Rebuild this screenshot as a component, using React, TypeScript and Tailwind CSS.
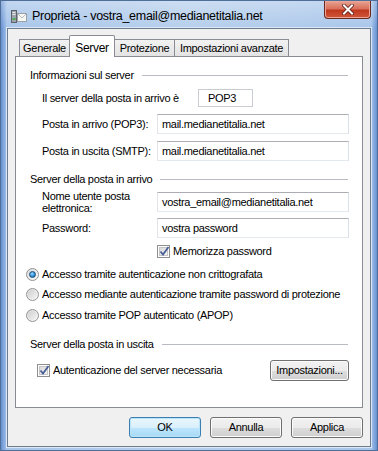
import type { ReactNode } from 'react'

const font = { fontFamily: '"Liberation Sans", Arial, sans-serif' }

function GroupHeader({ title }: { title: string }) {
  return (
    <div className="ml-[4px] flex h-[14px] items-center gap-[8px] pr-[1px]">
      <span className="whitespace-nowrap">{title}</span>
      <div className="h-px flex-1 bg-[#b8bcc2]" />
    </div>
  )
}

function TextBox({ value, className = '' }: { value: string; className?: string }) {
  return (
    <div
      className={`flex h-[20px] items-center whitespace-nowrap border border-[#abadb3] border-l-[#e2e3ea] border-b-[#e3e9ef] border-r-[#dbdfe6] bg-white pl-[4px] ${className}`}
    >
      {value}
    </div>
  )
}

function Checkbox({ checked }: { checked: boolean }) {
  return (
    <div className="flex h-[13px] w-[13px] shrink-0 items-center justify-center border border-[#8e8f8f] bg-white">
      <div className="relative h-[9px] w-[9px] border border-[#c6c6c6] bg-[linear-gradient(135deg,#d9d9d9,#f6f6f6)]">
        {checked && (
          <svg className="absolute -left-[1px] -top-[2px]" width="11" height="11" viewBox="0 0 11 11">
            <path d="M1.5 5.5 L4 8.5 L9.5 1" fill="none" stroke="#4a5f97" strokeWidth="1.8" />
          </svg>
        )}
      </div>
    </div>
  )
}

function Radio({ checked }: { checked: boolean }) {
  return (
    <div className="flex h-[13px] w-[13px] shrink-0 items-center justify-center rounded-full border border-[#929292] bg-[linear-gradient(135deg,#dcdcdc,#fbfbfb)]">
      {checked ? (
        <div className="h-[7px] w-[7px] rounded-full border border-[#1d4d7d] bg-[radial-gradient(circle_at_40%_35%,#9fdcff,#2c8fd6_55%,#14528f)]" />
      ) : (
        <div className="h-[9px] w-[9px] rounded-full bg-[linear-gradient(135deg,#cfcfcf,#f4f4f4)]" />
      )}
    </div>
  )
}

function Button({ children, primary, className = '' }: { children: ReactNode; primary?: boolean; className?: string }) {
  return (
    <div
      className={`flex h-[21px] items-center justify-center whitespace-nowrap rounded-[3px] border ${
        primary
          ? 'border-[#3c7fb1] bg-[linear-gradient(#eaf6fd_0%,#d9f0fc_50%,#bee6fd_51%,#a7d9f5_100%)] shadow-[inset_0_0_0_1px_#b9e3f8]'
          : 'border-[#707070] bg-[linear-gradient(#f2f2f2_0%,#ebebeb_50%,#dddddd_51%,#cfcfcf_100%)] shadow-[inset_0_0_0_1px_#fbfbfb]'
      } ${className}`}
    >
      {children}
    </div>
  )
}

function Tab({ label, active, width }: { label: string; active?: boolean; width: string }) {
  if (active) {
    return (
      <div
        className={`relative z-10 -mb-px flex h-[22px] items-start justify-center whitespace-nowrap rounded-t-[2px] border border-b-0 border-[#898c95] bg-white pt-[3px] text-[12px] ${width}`}
      >
        {label}
      </div>
    )
  }
  return (
    <div
      className={`flex h-[17px] items-center justify-center whitespace-nowrap border border-b-0 border-[#898c95] bg-[linear-gradient(#f2f2f2,#e3e3e3)] ${width}`}
    >
      {label}
    </div>
  )
}

export default function App() {
  return (
    <div
      className="flex h-[451px] w-[378px] flex-col overflow-hidden border border-[#4f6f99] bg-[linear-gradient(180deg,rgba(255,255,255,0.3),rgba(255,255,255,0)_28px),linear-gradient(90deg,#6591d3,#a8c5ea_6px,#b6cfec_50%,#a8c5ea_calc(100%_-_6px),#6591d3)] text-[11px] tracking-[-0.3px] text-black"
      style={font}
    >
      <div className="flex h-[27px] shrink-0 items-start justify-between pl-[10px] pr-[6px]">
        <div className="flex items-center gap-[5px] pt-[6px]">
          <svg width="16" height="14" viewBox="0 0 16 14">
            <rect x="0.5" y="1.5" width="5" height="12" fill="#9ea4ab" stroke="#5d636a" />
            <rect x="1.5" y="3" width="3" height="1" fill="#e8eaed" />
            <rect x="1.5" y="5" width="3" height="1" fill="#e8eaed" />
            <rect x="1.5" y="9" width="3" height="2" fill="#4fae5a" />
            <rect x="6.5" y="4.5" width="9" height="8" fill="#f7f7f2" stroke="#9aa0a6" />
            <path d="M7 5 L11 9 L15 5" fill="none" stroke="#b7bcc2" />
          </svg>
          <span className="text-[12.5px] tracking-[-0.3px] text-black">
            Proprietà - vostra_email@medianetitalia.net
          </span>
        </div>
        <div className="flex h-[18px] w-[47px] items-center justify-center rounded-b-[4px] border border-t-0 border-[#6b2820] bg-[linear-gradient(#e8a493_0%,#d9705c_45%,#c0391f_55%,#d0553a_100%)] shadow-[inset_0_0_0_1px_#eba594]">
          <svg width="12" height="11" viewBox="0 0 12 11">
            <path d="M2 1.5 L10 9.5 M10 1.5 L2 9.5" stroke="#5a1a12" strokeWidth="3.6" strokeLinecap="square" />
            <path d="M2 1.5 L10 9.5 M10 1.5 L2 9.5" stroke="#ffffff" strokeWidth="2" strokeLinecap="square" />
          </svg>
        </div>
      </div>

      <div className="mx-[6px] mb-[3px] flex flex-1 flex-col border border-[#6c7c8f] bg-[#f0f0f0] px-[7px] pt-[6px] shadow-[0_0_0_1px_#dce8f6]">
        <div className="flex items-end pl-[4px]">
          <Tab label="Generale" width="w-[51px]" />
          <Tab label="Server" active width="w-[46px] -ml-px" />
          <Tab label="Protezione" width="w-[61px] -ml-px" />
          <Tab label="Impostazioni avanzate" width="w-[115px] -ml-px" />
        </div>

        <div className="flex h-[352px] flex-col whitespace-nowrap border border-[#898c95] bg-white pl-[10px] pr-[13px] pt-[11px]">
          <GroupHeader title="Informazioni sul server" />

          <div className="ml-[16px] mt-[7px] flex h-[18px] items-center">
            <span className="w-[156px]">Il server della posta in arrivo è</span>
            <div className="flex h-[18px] w-[55px] items-center border border-[#c9ccd2] bg-white pl-[9px]">POP3</div>
          </div>

          <div className="ml-[16px] mt-[7px] flex items-center">
            <span className="w-[115px]">Posta in arrivo (POP3):</span>
            <TextBox value="mail.medianetitalia.net" className="flex-1" />
          </div>

          <div className="ml-[16px] mt-[7px] flex items-center">
            <span className="w-[115px]">Posta in uscita (SMTP):</span>
            <TextBox value="mail.medianetitalia.net" className="flex-1" />
          </div>

          <div className="mt-[11px]">
            <GroupHeader title="Server della posta in arrivo" />
          </div>

          <div className="ml-[16px] mt-[6px] flex h-[20px] items-center">
            <span className="w-[115px] leading-[12px]">
              Nome utente posta
              <br />
              elettronica:
            </span>
            <TextBox value="vostra_email@medianetitalia.net" className="flex-1" />
          </div>

          <div className="ml-[16px] mt-[6px] flex items-center">
            <span className="w-[115px]">Password:</span>
            <TextBox value="vostra password" className="flex-1" />
          </div>

          <div className="ml-[131px] mt-[7px] flex h-[13px] items-center gap-[3px]">
            <Checkbox checked />
            <span>Memorizza password</span>
          </div>

          <div className="mt-[9px] flex h-[14px] items-center gap-[3px]">
            <Radio checked />
            <span>Accesso tramite autenticazione non crittografata</span>
          </div>
          <div className="mt-[6px] flex h-[14px] items-center gap-[3px]">
            <Radio checked={false} />
            <span>Accesso mediante autenticazione tramite password di protezione</span>
          </div>
          <div className="mt-[7px] flex h-[14px] items-center gap-[3px]">
            <Radio checked={false} />
            <span>Accesso tramite POP autenticato (APOP)</span>
          </div>

          <div className="mt-[15px]">
            <GroupHeader title="Server della posta in uscita" />
          </div>

          <div className="mt-[9px] flex items-center justify-between">
            <div className="ml-[11px] flex items-center gap-[3px]">
              <Checkbox checked />
              <span>Autenticazione del server necessaria</span>
            </div>
            <Button className="w-[79px]">Impostazioni...</Button>
          </div>
        </div>

        <div className="mt-[9px] flex justify-end gap-[9px]">
          <Button primary className="w-[72px]">OK</Button>
          <Button className="w-[72px]">Annulla</Button>
          <Button className="w-[72px]">Applica</Button>
        </div>
      </div>
    </div>
  )
}
